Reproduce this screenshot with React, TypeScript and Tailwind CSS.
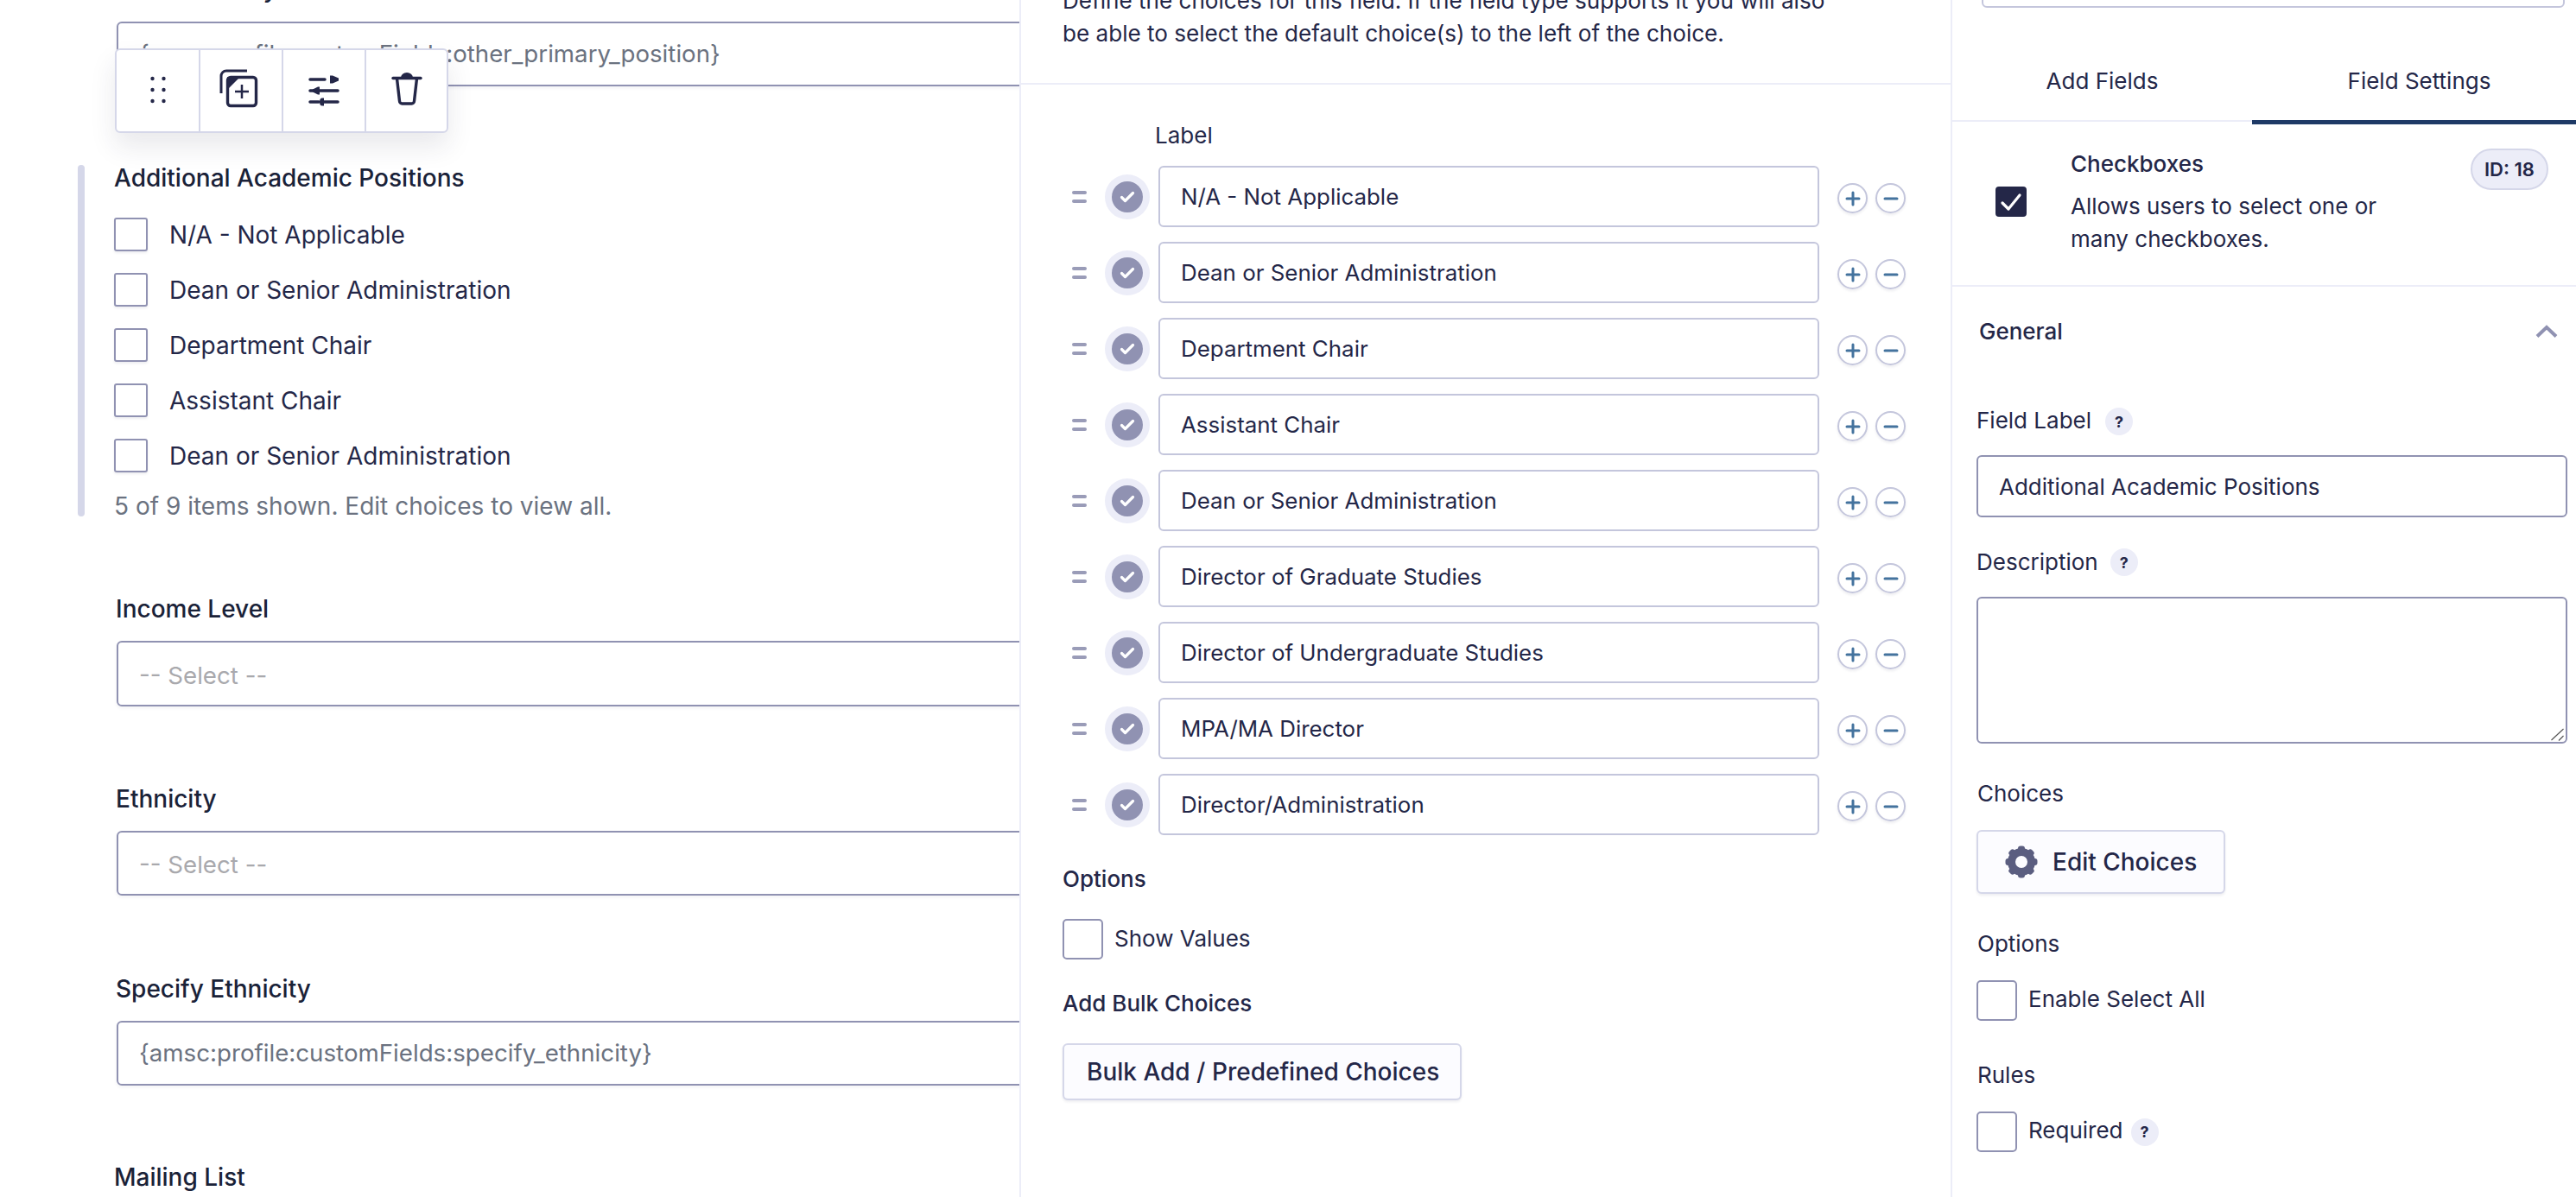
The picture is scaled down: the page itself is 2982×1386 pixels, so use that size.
import React from "react";

const previewChoices = [
  "N/A - Not Applicable",
  "Dean or Senior Administration",
  "Department Chair",
  "Assistant Chair",
  "Dean or Senior Administration",
];

const allChoices = [
  "N/A - Not Applicable",
  "Dean or Senior Administration",
  "Department Chair",
  "Assistant Chair",
  "Dean or Senior Administration",
  "Director of Graduate Studies",
  "Director of Undergraduate Studies",
  "MPA/MA Director",
  "Director/Administration",
];

const FieldLabel: React.FC<{ text: string; className?: string }> = ({ text, className = "" }) => (
  <div className={`h-[38px] leading-[38px] text-[28px] font-medium text-[#1a2238] ${className}`}>{text}</div>
);

const FieldBox: React.FC<{ text: string; muted?: boolean; className?: string }> = ({ text, muted, className = "" }) => (
  <div
    className={`ml-[2px] w-[1300px] pl-[24px] flex items-center border-2 border-[#9092b2] rounded-[6px] bg-white text-[27.7px] shadow-[0_2px_4px_rgba(36,39,72,0.06)] ${
      muted ? "text-[#a9a9ad] pt-[5px]" : "text-[#6b7280]"
    } ${className}`}
  >
    {text}
  </div>
);

const HelpDot: React.FC<{ className?: string }> = ({ className = "" }) => (
  <span className={`w-[32px] h-[32px] rounded-full bg-[#ecedf8] flex items-center justify-center text-[18px] font-bold text-[#242748] ${className}`}>
    ?
  </span>
);

const Box: React.FC<{ className?: string }> = ({ className = "" }) => (
  <div className={`shrink-0 bg-white border-2 border-[#9092b2] ${className}`} />
);

const DragDots = () => (
  <svg width="20" height="34" viewBox="0 0 20 34">
    {[3, 16, 29].map((y) => (
      <g key={y} fill="#242748">
        <circle cx="3.5" cy={y} r="2.2" />
        <circle cx="16.5" cy={y} r="2.2" />
      </g>
    ))}
  </svg>
);

const DuplicateIcon = () => (
  <svg className="-ml-[6px] -mt-[6px]" width="46" height="46" viewBox="0 0 46 46" fill="none" stroke="#242748">
    <path d="M3 29V9a6 6 0 0 1 6-6h24" strokeWidth="3" />
    <rect x="10.5" y="10.5" width="33" height="33" rx="3.5" strokeWidth="3.4" />
    <path d="M10 10h15L10 25z" fill="#242748" stroke="none" />
    <path d="M27 19v16M19 27h16" strokeWidth="2.5" />
  </svg>
);

const SlidersIcon = () => (
  <svg width="36" height="38" viewBox="0 0 36 38" fill="none" stroke="#242748" strokeWidth="3.5" strokeLinecap="round">
    <path d="M2 6h17M2 19h5M13 19h21M2 32h10M17 32h17" />
    <path d="M25 1.500h3l7 3v3l-7 3h-3z" fill="#242748" stroke="none" />
    <path d="M13 14.500h-2l-6 3v3l6 3h2z" fill="#242748" stroke="none" />
    <path d="M18 27.500h-2a3 4.500 0 0 0 0 9h2z" fill="#242748" stroke="none" />
  </svg>
);

const TrashIcon = () => (
  <svg className="-mt-[4px]" width="36" height="40" viewBox="0 0 36 40" fill="none" stroke="#242748" strokeWidth="3.4" strokeLinecap="round" strokeLinejoin="round">
    <path d="M2 7.500h32" />
    <path d="M11 7a7 6 0 0 1 14 0z" fill="#242748" stroke="none" />
    <path d="M6.500 8l3 26a3 3 0 0 0 3 3h11a3 3 0 0 0 3-3l3-26" />
  </svg>
);

const GearIcon = () => (
  <svg width="38" height="38" viewBox="0 0 38 38">
    {[0, 45, 90, 135, 180, 225, 270, 315].map((deg) => (
      <rect key={deg} x="15" y="0.5" width="8" height="10" rx="3" fill="#5b5e80" transform={`rotate(${deg} 19 19)`} />
    ))}
    <circle cx="19" cy="19" r="11.5" fill="none" stroke="#5b5e80" strokeWidth="9" />
  </svg>
);

const ChoiceRow: React.FC<{ text: string }> = ({ text }) => (
  <div className="flex items-center ml-[11px]">
    <div className="w-[17px] flex flex-col gap-[6px]">
      <span className="h-[4px] rounded-full bg-[#9a9cb8]" />
      <span className="h-[4px] rounded-full bg-[#9a9cb8]" />
    </div>
    <div className="ml-[21px] w-[52px] h-[52px] rounded-full bg-[#ecedf8] flex items-center justify-center">
      <div className="w-[36px] h-[36px] rounded-full bg-[#9092b2] flex items-center justify-center">
        <svg width="18" height="14" viewBox="0 0 18 14" fill="none" stroke="#fff" strokeWidth="3.2" strokeLinecap="round" strokeLinejoin="round">
          <path d="M2.500 7.500l4 4 9-9" />
        </svg>
      </div>
    </div>
    <div className="ml-[10px] w-[765px] h-[71px] pl-[24px] pt-[1px] flex items-center bg-white border-2 border-[#c4c6dc] rounded-[6px] text-[25.9px] text-[#242748]">
      {text}
    </div>
    <div className="ml-[21px] mt-[4px] flex gap-[9px]">
      <div className="w-[35px] h-[35px] rounded-full border-2 border-[#c4c6dc] flex items-center justify-center shadow-[0_2px_3px_rgba(36,39,72,0.08)]">
        <svg width="18" height="18" viewBox="0 0 18 18" stroke="#44739e" strokeWidth="3" strokeLinecap="round">
          <path d="M9 2v14M2 9h14" />
        </svg>
      </div>
      <div className="w-[35px] h-[35px] rounded-full border-2 border-[#c4c6dc] flex items-center justify-center shadow-[0_2px_3px_rgba(36,39,72,0.08)]">
        <svg width="18" height="18" viewBox="0 0 18 18" stroke="#44739e" strokeWidth="3" strokeLinecap="round">
          <path d="M2 9h14" />
        </svg>
      </div>
    </div>
  </div>
);

const App: React.FC = () => {
  return (
    <div className="w-[2982px] h-[1386px] flex overflow-hidden bg-white font-['Inter',sans-serif]">
      {/* form preview */}
      <div className="relative w-[1180px] shrink-0 h-full overflow-hidden">
        <div className="-mt-[32px] ml-[133px]">
          <FieldLabel text="Other Primary Position" className="ml-[1px]" />
          <FieldBox text="{amsc:profile:customFields:other_primary_position}" className="mt-[19px] h-[75px]" />
        </div>

        {/* floating toolbar */}
        <div className="absolute left-[133px] top-[56px] w-[386px] h-[98px] flex bg-white border-2 border-[#d5d7e9] rounded-[6px] shadow-[0_16px_30px_rgba(36,39,72,0.1)]">
          <div className="w-[97px] border-r-2 border-[#d5d7e9] flex items-center justify-center"><DragDots /></div>
          <div className="w-[96px] border-r-2 border-[#d5d7e9] flex items-center justify-center"><DuplicateIcon /></div>
          <div className="w-[96px] border-r-2 border-[#d5d7e9] flex items-center justify-center"><SlidersIcon /></div>
          <div className="flex-1 flex items-center justify-center"><TrashIcon /></div>
        </div>

        <div className="mt-[91px] ml-[90px] flex items-start">
          <div className="w-[8px] h-[407px] rounded-full bg-[#d5d7e9]" />
          <div className="ml-[34px]">
            <div className="h-[30px] leading-[30px] text-[28px] font-medium text-[#1a2238]">Additional Academic Positions</div>
            <div className="mt-[31px] flex flex-col gap-[25px]">
              {previewChoices.map((choice, index) => (
                <div key={index} className="h-[39px] flex items-center">
                  <Box className="w-[39px] h-[39px] rounded-[3px] shadow-[0_2px_3px_rgba(36,39,72,0.08)]" />
                  <span className="ml-[25px] text-[28px] text-[#242748]">{choice}</span>
                </div>
              ))}
            </div>
            <div className="mt-[20px] h-[38px] leading-[38px] text-[28px] text-[#6b7280]">5 of 9 items shown. Edit choices to view all.</div>
          </div>
        </div>

        <div className="ml-[133px]">
          <FieldLabel text="Income Level" className="mt-[81px] ml-[1px]" />
          <FieldBox text="-- Select --" muted className="mt-[18px] h-[76px]" />
          <FieldLabel text="Ethnicity" className="mt-[88px] ml-[1px]" />
          <FieldBox text="-- Select --" muted className="mt-[18px] h-[75px]" />
          <FieldLabel text="Specify Ethnicity" className="mt-[89px] ml-[1px]" />
          <FieldBox text="{amsc:profile:customFields:specify_ethnicity}" className="mt-[18px] h-[75px]" />
          <FieldLabel text="Mailing List" className="mt-[87px] -ml-[1px]" />
        </div>
      </div>

      {/* edit choices panel */}
      <div className="w-[1080px] shrink-0 h-full bg-white border-l-2 border-r-2 border-[#ecedf8] text-[#242748] text-[26px]">
        <div className="-mt-[18px] px-[48px] leading-[38px] w-[990px] text-[26.1px]">
          Define the choices for this field. If the field type supports it you will also be able to select the default choice(s) to the left of the choice.
        </div>
        <div className="mt-[38px] h-[2px] bg-[#ecedf8]" />
        <div className="pl-[48px]">
          <div className="mt-[44px] ml-[107px] h-[30px] leading-[30px]">Label</div>
          <div className="mt-[20px] flex flex-col gap-[17px]">
            {allChoices.map((choice, index) => (
              <ChoiceRow key={index} text={choice} />
            ))}
          </div>
          <div className="mt-[36px] h-[30px] leading-[30px] font-medium">Options</div>
          <div className="mt-[31px] flex items-center">
            <Box className="w-[47px] h-[47px] rounded-[5px]" />
            <span className="ml-[13px] -mt-[2px]">Show Values</span>
          </div>
          <div className="mt-[36px] h-[30px] leading-[30px] font-medium">Add Bulk Choices</div>
          <div className="mt-[31px] w-[462px] h-[66px] flex items-center pl-[26px] bg-[#fcfcff] border-2 border-[#d5d7e9] rounded-[6px] text-[28px] font-medium shadow-[0_2px_3px_rgba(36,39,72,0.08)]">
            Bulk Add / Predefined Choices
          </div>
        </div>
      </div>

      {/* settings sidebar */}
      <div className="flex-1 h-full text-[#242748] text-[26px]">
        <div className="-mt-[51px] ml-[34px] w-[675px] h-[60px] border-2 border-[#c4c6dc] rounded-[6px]" />

        <div className="flex items-start h-[132px]">
          <div className="w-[347px] h-[132px] pt-[70px] text-center border-b-2 border-[#ecedf8] leading-[30px]">Add Fields</div>
          <div className="flex-1 h-[135px] pt-[70px] pl-[12px] text-center border-b-[5px] border-[#1e3a66] leading-[30px]">Field Settings</div>
        </div>

        <div className="h-[189px] flex items-start border-b-2 border-[#ecedf8] box-content">
          <div className="ml-[50px] mt-[75px] w-[36px] h-[35px] rounded-[4px] bg-[#242748] flex items-center justify-center">
            <svg width="26" height="22" viewBox="0 0 26 22" fill="none" stroke="#fff" strokeWidth="3.2" strokeLinecap="round" strokeLinejoin="round">
              <path d="M3 12l7 7L23 3" />
            </svg>
          </div>
          <div className="ml-[51px] mt-[34px] w-[463px]">
            <div className="h-[30px] leading-[30px] font-medium">Checkboxes</div>
            <div className="mt-[15px] w-[380px] leading-[38px]">Allows users to select one or many checkboxes.</div>
          </div>
          <div className="mt-[31px] w-[90px] h-[48px] rounded-full bg-[#ecedf8] border-2 border-[#d5d7e9] flex items-center justify-center text-[22px] font-semibold">
            ID: 18
          </div>
        </div>

        <div className="mt-[36px] pl-[31px] pr-[21px] h-[30px] flex items-center justify-between font-medium">
          <span>General</span>
          <svg width="26" height="15" viewBox="0 0 26 15" fill="none" stroke="#9092b2" strokeWidth="4">
            <path d="M2 13.500L13 3l11 10.500" />
          </svg>
        </div>

        <div className="pl-[28px]">
          <div className="mt-[73px] h-[30px] flex items-center">
            <span>Field Label</span>
            <HelpDot className="ml-[16px] mt-[4px]" />
          </div>
          <div className="mt-[26px] w-[684px] h-[72px] pl-[24px] flex items-center border-2 border-[#9092b2] rounded-[6px]">
            Additional Academic Positions
          </div>
          <div className="mt-[36px] h-[30px] flex items-center">
            <span>Description</span>
            <HelpDot className="ml-[14px] mt-[2px]" />
          </div>
          <div className="relative mt-[26px] w-[684px] h-[170px] border-2 border-[#9092b2] rounded-[6px] bg-white">
            {/* resize grip */}
            <svg className="absolute right-[2px] bottom-[1px]" width="16" height="16" viewBox="0 0 16 16" fill="none" stroke="#555" strokeWidth="1.2">
              <path d="M1.500 15L15.500 2M10 15.500l5.500-5.500" />
            </svg>
          </div>
          <div className="mt-[43px] ml-[1px] h-[30px] leading-[30px]">Choices</div>
          <div className="mt-[27px] w-[288px] h-[74px] pl-[31px] flex items-center bg-[#fcfcff] border-2 border-[#d5d7e9] rounded-[6px] text-[28px] font-medium shadow-[0_2px_3px_rgba(36,39,72,0.08)]">
            <GearIcon />
            <span className="ml-[17px]">Edit Choices</span>
          </div>
          <div className="mt-[43px] ml-[1px] h-[30px] leading-[30px]">Options</div>
          <div className="mt-[27px] flex items-center">
            <Box className="w-[47px] h-[47px] rounded-[5px]" />
            <span className="ml-[13px] -mt-[4px]">Enable Select All</span>
          </div>
          <div className="mt-[48px] ml-[1px] h-[30px] leading-[30px]">Rules</div>
          <div className="mt-[27px] flex items-center">
            <Box className="w-[47px] h-[47px] rounded-[5px]" />
            <span className="ml-[13px] -mt-[4px]">Required</span>
            <HelpDot className="ml-[9px]" />
          </div>
        </div>
      </div>
    </div>
  );
};

export default App;
